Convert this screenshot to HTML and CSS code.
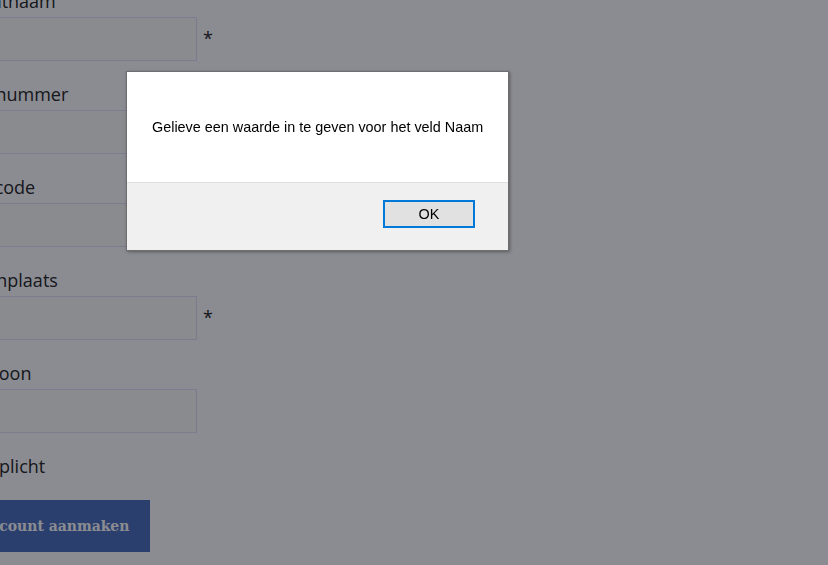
FILE: index.html
```html
<!DOCTYPE html>
<html lang="nl">
<head>
    <meta charset="UTF-8">
    <meta name="viewport" content="width=device-width, initial-scale=1.0">
    <title>Account aanmaken</title>
    <link rel="stylesheet" href="styles.css">
</head>
<body>
    <form class="signup">
        <div class="field">
            <label for="straat">Straatnaam</label>
            <div class="input-row">
                <input type="text" id="straat">
                <span class="req">*</span>
            </div>
        </div>
        <div class="field">
            <label for="huisnr">Huisnummer</label>
            <div class="input-row">
                <input type="text" id="huisnr">
            </div>
        </div>
        <div class="field">
            <label for="postcode">Postcode</label>
            <div class="input-row">
                <input type="text" id="postcode">
            </div>
        </div>
        <div class="field">
            <label for="woonplaats">Woonplaats</label>
            <div class="input-row">
                <input type="text" id="woonplaats">
                <span class="req">*</span>
            </div>
        </div>
        <div class="field">
            <label for="telefoon">Telefoon</label>
            <div class="input-row">
                <input type="text" id="telefoon">
            </div>
        </div>
        <div class="note">* verplicht</div>
        <button type="submit" class="submit">Account aanmaken</button>
    </form>

    <div class="backdrop"></div>

    <div class="alert">
        <div class="alert-body">Gelieve een waarde in te geven voor het veld Naam</div>
        <div class="alert-footer">
            <button type="button" class="alert-ok">OK</button>
        </div>
    </div>
</body>
</html>
```

FILE: styles.css
```css
html, body {
    height: 100%;
}
body {
    margin: 0;
    background-color: #fff;
    font-family: "Open Sans", Arial, sans-serif;
    color: #222;
    overflow: hidden;
}
.signup {
    margin: -12px 0 0 -42px;
    width: 270px;
}
.field {
    margin-bottom: 20px;
}
.field label {
    display: block;
    font-size: 18px;
    line-height: 26px;
    margin-bottom: 3px;
}
.input-row {
    display: flex;
    align-items: center;
}
.input-row input {
    box-sizing: border-box;
    width: 239px;
    height: 44px;
    margin: 0;
    border: 1px solid #e2e0fb;
    background-color: #fdfdfb;
    font: inherit;
}
.req {
    margin-left: 6px;
    font-size: 18px;
    line-height: 18px;
    padding-bottom: 2px;
}
.note {
    font-size: 18px;
    line-height: 26px;
    margin-bottom: 21px;
}
.submit {
    display: block;
    box-sizing: border-box;
    width: 192px;
    height: 52px;
    padding: 0 0 2px 22px;
    border: 0;
    background-color: #466bbd;
    color: #fff;
    font-family: "DejaVu Serif", Georgia, serif;
    font-weight: bold;
    font-stretch: condensed;
    font-size: 15.5px;
    text-align: left;
}

/* dark layer behind the alert */
.backdrop {
    position: fixed;
    inset: 0;
    background-color: rgba(13, 15, 26, 0.48);
}

.alert {
    position: absolute;
    left: 126px;
    top: 71px;
    width: 383px;
    height: 180px;
    box-sizing: border-box;
    border: 1px solid #6e6e70;
    background-color: #f0f0f0;
    box-shadow: 1px 1px 3px rgba(0, 0, 0, 0.35);
    font-family: "Liberation Sans", Arial, sans-serif;
    font-size: 14.4px;
    color: #000;
    display: flex;
    flex-direction: column;
}
.alert-body {
    height: 111px;
    box-sizing: border-box;
    padding: 47px 0 0 25px;
    background-color: #fff;
    border-bottom: 1px solid #dfdfdf;
}
.alert-footer {
    flex: 1;
    display: flex;
    justify-content: flex-end;
    padding: 17px 33px 0 0;
}
.alert-ok {
    box-sizing: border-box;
    width: 92px;
    height: 28px;
    border: 2px solid #0078d7;
    background-color: #e1e1e1;
    font: inherit;
    color: #000;
    padding: 0;
}
```
